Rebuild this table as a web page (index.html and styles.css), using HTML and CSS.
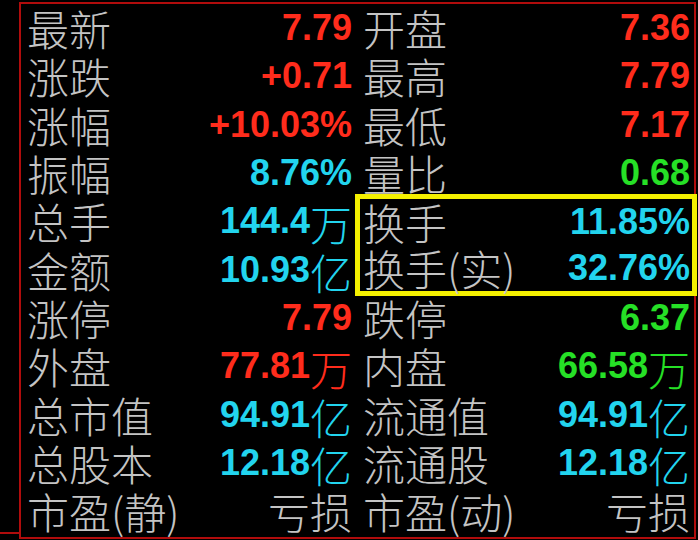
FILE: index.html
```html
<!DOCTYPE html>
<html lang="zh-CN">
<head>
<meta charset="utf-8">
<title>行情</title>
<link rel="stylesheet" href="styles.css">
</head>
<body>
<div class="stub"></div>
<div class="frame">
  <div class="col">
    <div class="row"><span class="lbl">最新</span><span class="val up">7.79</span></div>
    <div class="row"><span class="lbl">涨跌</span><span class="val up">+0.71</span></div>
    <div class="row"><span class="lbl">涨幅</span><span class="val up">+10.03%</span></div>
    <div class="row"><span class="lbl">振幅</span><span class="val cy">8.76%</span></div>
    <div class="row"><span class="lbl">总手</span><span class="val cy">144.4<span class="unit">万</span></span></div>
    <div class="row"><span class="lbl">金额</span><span class="val cy">10.93<span class="unit">亿</span></span></div>
    <div class="row"><span class="lbl">涨停</span><span class="val up">7.79</span></div>
    <div class="row"><span class="lbl">外盘</span><span class="val up">77.81<span class="unit">万</span></span></div>
    <div class="row"><span class="lbl">总市值</span><span class="val cy">94.91<span class="unit">亿</span></span></div>
    <div class="row"><span class="lbl">总股本</span><span class="val cy">12.18<span class="unit">亿</span></span></div>
    <div class="row"><span class="lbl">市盈(静)</span><span class="lbl">亏损</span></div>
  </div>
  <div class="col">
    <div class="row"><span class="lbl">开盘</span><span class="val up">7.36</span></div>
    <div class="row"><span class="lbl">最高</span><span class="val up">7.79</span></div>
    <div class="row"><span class="lbl">最低</span><span class="val up">7.17</span></div>
    <div class="row"><span class="lbl">量比</span><span class="val dn">0.68</span></div>
    <div class="hl">
      <div class="row short"><span class="lbl">换手</span><span class="val cy">11.85%</span></div>
      <div class="row short"><span class="lbl">换手(实)</span><span class="val cy">32.76%</span></div>
    </div>
    <div class="row"><span class="lbl">跌停</span><span class="val dn">6.37</span></div>
    <div class="row"><span class="lbl">内盘</span><span class="val dn">66.58<span class="unit">万</span></span></div>
    <div class="row"><span class="lbl">流通值</span><span class="val cy">94.91<span class="unit">亿</span></span></div>
    <div class="row"><span class="lbl">流通股</span><span class="val cy">12.18<span class="unit">亿</span></span></div>
    <div class="row"><span class="lbl">市盈(动)</span><span class="lbl">亏损</span></div>
  </div>
</div>
</body>
</html>
```
FILE: styles.css
```css
html, body {
  margin: 0;
  padding: 0;
  background: #000;
}
body {
  display: flex;
  align-items: flex-start;
  width: 698px;
  height: 540px;
  overflow: hidden;
}
.stub {
  width: 19px;
  height: 532px;
  border-bottom: 2px solid #b00c0c;
  flex: none;
}
.frame {
  flex: none;
  margin-top: 2px;
  height: 533px;
  border: 2px solid #b00c0c;
  box-sizing: content-box;
  padding: 0 4px 0 6px;
  width: 663px;
  display: grid;
  grid-template-columns: 325px 327px;
  column-gap: 11px;
  align-content: start;
}
.col {
  display: flex;
  flex-direction: column;
}
.row {
  height: 48.3px;
  display: flex;
  align-items: center;
  justify-content: space-between;
}
.row.short {
  height: 46px;
}
.hl {
  border: 5px solid #f4f000;
  margin: -3px -7px -2.4px -8px;
  padding: 0 2px 0 3px;
}
.lbl {
  font-family: "Noto Sans CJK SC", sans-serif;
  font-weight: 300;
  font-size: 42px;
  line-height: 46px;
  color: #c4c4c4;
  white-space: nowrap;
}
.val {
  font-family: "Liberation Sans", Arial, sans-serif;
  font-weight: 700;
  font-size: 36px;
  line-height: 44px;
  display: flex;
  align-items: center;
  white-space: nowrap;
}
.unit {
  font-family: "Noto Sans CJK SC", sans-serif;
  font-weight: 300;
  font-size: 42px;
  line-height: 46px;
  margin-top: 4px;
}
.up { color: #ff2c1c; }
.cy { color: #22d4ee; }
.dn { color: #26e026; }
```
